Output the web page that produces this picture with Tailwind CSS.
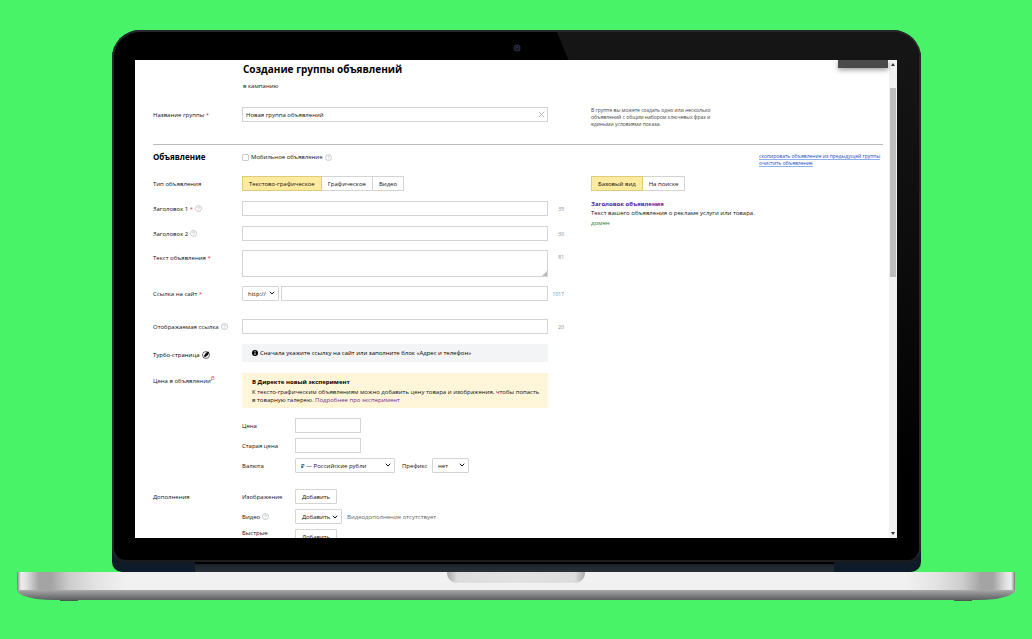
<!DOCTYPE html>
<html lang="ru">
<head>
<meta charset="utf-8">
<meta name="viewport" content="width=device-width, initial-scale=1">
<title>Создание группы объявлений</title>
<script src="https://cdn.jsdelivr.net/npm/@tailwindcss/browser@4"></script>
</head>
<body class="flex h-screen flex-col overflow-hidden bg-[#49f368] pt-[30px] pb-[38px] font-['Open_Sans','Noto_Sans',sans-serif] text-[6px] leading-[8px] text-[#111]">
<svg class="hidden" aria-hidden="true">
  <symbol id="help" viewBox="0 0 14 14"><circle cx="7" cy="7" r="6" fill="none" stroke="#b5b5b5" stroke-width="1.4"/><path d="M5 5.6C5 3.2 9 3.2 9 5.5C9 7 7 6.9 7 8.4M7 9.6V11" fill="none" stroke="#b5b5b5" stroke-width="1.3"/></symbol>
  <symbol id="chevron" viewBox="0 0 12 8"><path d="M1.5 1.5L6 6L10.500 1.500" fill="none" stroke="currentColor" stroke-width="2"/></symbol>
</svg>

<!-- Laptop lid -->
<div class="mr-[111px] ml-[112px] flex min-h-0 flex-1 flex-col rounded-t-[28px] rounded-b-[10px] bg-[#0f1b28]">
  <div class="relative flex min-h-0 flex-1 flex-col overflow-hidden rounded-t-[28px] rounded-b-[14px] border-2 border-[#25272b] border-b-[#1c1c1c] bg-black pt-[28px] pr-[22px] pb-[22px] pl-[21px]">
    <svg class="absolute top-0 right-0 h-full w-[362px]" viewBox="0 0 362 528" preserveAspectRatio="none" aria-hidden="true">
      <defs><linearGradient id="glare" x1="0" y1="0" x2="0" y2="1"><stop offset="0" stop-color="#161616"/><stop offset=".4" stop-color="#0d0d0d"/><stop offset=".85" stop-color="#000"/></linearGradient></defs>
      <path d="M0 0H362V528H215Z" fill="url(#glare)"/>
    </svg>
    <svg class="absolute top-3 left-1/2 size-[8px] -translate-x-1/2" viewBox="0 0 8 8" aria-hidden="true"><circle cx="4" cy="4" r="3.500" fill="#262a36"/><circle cx="4" cy="4" r="2.200" fill="#10131f"/><circle cx="4" cy="3.500" r="1" fill="#343c60"/></svg>

    <!-- Screen -->
    <div class="relative flex min-h-0 flex-1 overflow-hidden bg-white">
      <main class="min-w-0 flex-1 overflow-hidden pr-[6px] pl-[18px]">
        <header class="pt-[2px] pl-[90px]">
          <h1 class="text-[10px] leading-[14px] font-bold text-black">Создание группы объявлений</h1>
          <p class="mt-[6px]">в кампанию</p>
        </header>

        <div class="mt-[17px] flex h-[38px] border-b border-[#bbb]">
          <div class="grid h-[15px] flex-1 grid-cols-[89px_minmax(0,1fr)] items-center">
            <label for="group">Название группы<span class="text-red-500"> *</span></label>
            <div class="relative">
              <input id="group" type="text" value="Новая группа объявлений" class="block h-[15px] w-full border border-[#d4d4d4] bg-white px-[3px]">
              <button type="button" aria-label="Очистить" class="absolute top-[4px] right-[3px] size-[7px]"><svg viewBox="0 0 8 8" class="block size-full"><path d="M1 1L7 7M7 1L1 7" stroke="#aaa" stroke-width="1"/></svg></button>
            </div>
          </div>
          <p class="ml-[43px] w-[292px] text-[5px] leading-[7px] text-[#444]">В группе вы можете создать одно или несколько<br>объявлений с общим набором ключевых фраз и<br>едиными условиями показа.</p>
        </div>

        <div class="flex gap-[27px] pt-[6px]">
          <form class="flex-1">
            <div class="grid h-[12px] grid-cols-[89px_minmax(0,1fr)] items-center">
              <h2 class="text-[8px] leading-[12px] font-bold text-black">Объявление</h2>
              <div class="flex items-center gap-[2px]"><input id="mobile" type="checkbox" class="size-[7px] appearance-none rounded-[1px] border border-[#ccc] bg-white"><label for="mobile">Мобильное объявление</label><svg class="size-[7px]"><use href="#help"/></svg></div>
            </div>

            <div class="mt-[13px] grid h-[15px] grid-cols-[89px_minmax(0,1fr)] items-center">
              <span>Тип объявления</span>
              <div class="flex h-[15px]">
                <button type="button" class="border border-[#e0cb7a] bg-[#ffeba0] px-[6px]">Текстово-графическое</button><button type="button" class="border border-l-0 border-[#d4d4d4] px-[6px]">Графическое</button><button type="button" class="border border-l-0 border-[#d4d4d4] px-[6px]">Видео</button>
              </div>
            </div>

            <div class="mt-[10px] grid h-[15px] grid-cols-[89px_minmax(0,1fr)_16px] items-center">
              <span class="flex items-center gap-[2px]"><label for="t1">Заголовок 1<span class="text-red-500"> *</span></label><svg class="size-[7px]"><use href="#help"/></svg></span>
              <input id="t1" type="text" class="h-[15px] w-full border border-[#d4d4d4] px-[3px]"><span class="text-right text-[5px] text-[#888]">35</span>
            </div>
            <div class="mt-[10px] grid h-[15px] grid-cols-[89px_minmax(0,1fr)_16px] items-center">
              <span class="flex items-center gap-[2px]"><label for="t2">Заголовок 2</label><svg class="size-[7px]"><use href="#help"/></svg></span>
              <input id="t2" type="text" class="h-[15px] w-full border border-[#d4d4d4] px-[3px]"><span class="text-right text-[5px] text-[#888]">30</span>
            </div>
            <div class="mt-[9px] grid grid-cols-[89px_minmax(0,1fr)_16px] items-start">
              <label for="body" class="pt-[4px]">Текст объявления<span class="text-red-500"> *</span></label>
              <div class="relative"><textarea id="body" class="block h-[27px] w-full resize-none border border-[#d4d4d4] px-[3px]"></textarea><svg class="absolute right-[1px] bottom-[1px] size-[5px]" viewBox="0 0 5 5" aria-hidden="true"><path d="M5 0V5H0Z" fill="#bbb"/></svg></div>
              <span class="pt-[3px] text-right text-[5px] text-[#888]">81</span>
            </div>
            <div class="mt-[9px] grid h-[15px] grid-cols-[89px_minmax(0,1fr)_16px] items-center">
              <label for="url">Ссылка на сайт<span class="text-red-500"> *</span></label>
              <div class="flex gap-[2px]">
                <div class="relative w-[37px]"><select aria-label="Протокол" class="block h-[15px] w-full appearance-none rounded-[1px] border border-[#d4d4d4] bg-white pl-[5px]"><option>http://</option></select><svg class="pointer-events-none absolute top-[5px] right-[4px] h-[4px] w-[6px]"><use href="#chevron"/></svg></div>
                <input id="url" type="text" class="h-[15px] min-w-0 flex-1 border border-[#d4d4d4] px-[3px]">
              </div>
              <span class="text-right text-[5px] text-[#888]">1017</span>
            </div>
            <div class="mt-[18px] grid h-[15px] grid-cols-[89px_minmax(0,1fr)_16px] items-center">
              <span class="flex items-center gap-[2px]"><label for="durl">Отображаемая ссылка</label><svg class="size-[7px]"><use href="#help"/></svg></span>
              <input id="durl" type="text" class="h-[15px] w-full border border-[#d4d4d4] px-[3px]"><span class="text-right text-[5px] text-[#888]">20</span>
            </div>

            <div class="mt-[10px] grid grid-cols-[89px_minmax(0,1fr)_16px] items-center">
              <span class="flex items-center gap-[2px] pt-[3px] text-black">Турбо-страница <svg class="size-[8px]" viewBox="0 0 16 16"><circle cx="8" cy="8" r="7" fill="none" stroke="#222" stroke-width="1.300"/><path d="M14 1.500C9 2 6.500 4.500 5.500 7.500L3.500 8.500L7.500 12.500L8.700 10.500C12 9 14 6 14 1.500ZM5 10L2 14L6 11.500Z" fill="#111"/></svg></span>
              <p class="flex h-[18px] items-center gap-[2px] bg-[#f3f4f5] pl-[10px] text-black"><svg class="size-[6px]" viewBox="0 0 12 12"><circle cx="6" cy="6" r="6"/><path d="M6 2V4M6 5V10" stroke="#fff" stroke-width="1.800"/></svg>Сначала укажите ссылку на сайт или заполните блок «Адрес и телефон»</p>
            </div>

            <div class="mt-[11px] grid grid-cols-[89px_minmax(0,1fr)_16px] items-start">
              <span class="pt-[4px]">Цена в объявлении<sup class="text-[6px] leading-none text-red-500">β</sup></span>
              <div class="h-[35px] bg-[#fff6d9] pt-[5px] pl-[10px] leading-[8px]">
                <b class="block text-black">В Директе новый эксперимент</b>
                <p class="mt-[2px]">К тексто-графическим объявлениям можно добавить цену товара и изображения, чтобы попасть<br>в товарную галерею. <a href="#" class="text-[#6a2c91]">Подробнее про эксперимент</a></p>
              </div>
            </div>

            <div class="mt-[10px] ml-[89px] grid grid-cols-[53px_minmax(0,1fr)] items-center gap-y-[5px]">
              <label for="price">Цена</label><input id="price" type="text" class="h-[15px] w-[66px] border border-[#d4d4d4] px-[3px]">
              <label for="old">Старая цена</label><input id="old" type="text" class="h-[15px] w-[66px] border border-[#d4d4d4] px-[3px]">
              <label for="cur">Валюта</label>
              <div class="flex items-center">
                <div class="relative w-[100px]"><select id="cur" class="block h-[15px] w-full appearance-none rounded-[1px] border border-[#d4d4d4] bg-white pl-[5px]"><option>₽ — Российские рубли</option></select><svg class="pointer-events-none absolute top-[5px] right-[4px] h-[4px] w-[6px]"><use href="#chevron"/></svg></div>
                <label for="pre" class="ml-[7px] w-[30px]">Префикс</label>
                <div class="relative w-[37px]"><select id="pre" class="block h-[15px] w-full appearance-none rounded-[1px] border border-[#d4d4d4] bg-white pl-[5px]"><option>нет</option></select><svg class="pointer-events-none absolute top-[5px] right-[4px] h-[4px] w-[6px]"><use href="#chevron"/></svg></div>
              </div>
            </div>

            <div class="mt-[16px] grid grid-cols-[89px_53px_minmax(0,1fr)] items-center gap-y-[5px]">
              <span>Дополнения</span><span>Изображение</span><button type="button" class="h-[15px] w-[42px] rounded-[1px] border border-[#d4d4d4]">Добавить</button>
              <span class="col-start-2 flex items-center gap-[2px]">Видео <svg class="size-[7px]"><use href="#help"/></svg></span>
              <div class="flex items-center gap-[5px]"><button type="button" class="flex h-[15px] w-[47px] items-center gap-[2px] rounded-[1px] border border-[#d4d4d4] pl-[6px]">Добавить<svg class="h-[4px] w-[6px]"><use href="#chevron"/></svg></button><span class="text-[#666]">Видеодополнение отсутствует</span></div>
              <span class="col-start-2 self-start">Быстрые</span><button type="button" class="h-[15px] w-[42px] rounded-[1px] border border-[#d4d4d4]">Добавить</button>
            </div>
          </form>

          <aside class="w-[292px]">
            <nav class="ml-auto flex w-[124px] flex-col items-start pt-[2px] text-[5px] leading-[6px] whitespace-nowrap text-[#1a49c0]"><a href="#" class="border-b border-[#8fb0ee]">скопировать объявление из предыдущей группы</a><a href="#" class="border-b border-[#8fb0ee]">очистить объявление</a></nav>
            <div class="mt-[9px] flex h-[15px]">
              <button type="button" class="border border-[#e0cb7a] bg-[#ffeba0] px-[6px]">Базовый вид</button><button type="button" class="border border-l-0 border-[#d4d4d4] px-[6px]">На поиске</button>
            </div>
            <h3 class="mt-[9px] font-bold text-[#551a9b]">Заголовок объявления</h3>
            <p class="mt-[1px]">Текст вашего объявления о рекламе услуги или товара.</p>
            <p class="mt-[2px] text-[#1b7a1b]">домен</p>
          </aside>
        </div>
      </main>

      <div class="absolute top-0 right-[9px] h-[8px] w-[50px] bg-[#4a4a4a] shadow-[0_2px_5px_rgba(0,0,0,0.4)]"></div>
      <div class="flex w-[8px] flex-col items-center justify-between bg-[#f1f1f1] py-[3px]">
        <svg class="h-[3px] w-[4px]" viewBox="0 0 4 3"><path d="M0 3L2 0L4 3Z" fill="#333"/></svg>
        <div class="mt-[22px] h-[189px] w-[6px] bg-[#bdbdbd]"></div>
        <svg class="mt-auto h-[3px] w-[4px]" viewBox="0 0 4 3"><path d="M0 0L2 3L4 0Z" fill="#333"/></svg>
      </div>
    </div>
  </div>
  <div class="mr-[87px] ml-[83px] h-[10px] border-t-2 border-black bg-linear-to-b from-[#1b2128] to-[#293037]"></div>
</div>

<!-- Laptop base -->
<div class="mr-[17px] ml-[17px]">
  <div class="flex h-[18px] justify-center bg-[linear-gradient(90deg,#777_0,#bbb_2px,#eee_4px,#ddd_10px,#a4a4a4_22px,#a4a4a4_34px,#ccc_52px,#e4e4e4_80px,#f1f1f1_110px,#f1f1f1_calc(100%-110px),#e4e4e4_calc(100%-80px),#ccc_calc(100%-52px),#a4a4a4_calc(100%-34px),#a4a4a4_calc(100%-22px),#ddd_calc(100%-10px),#eee_calc(100%-4px),#bbb_calc(100%-2px),#777_100%)]">
    <div class="h-[11px] w-[138px] rounded-b-[10px] bg-[linear-gradient(90deg,#aaa,#dcdcdc_10px,#e2e2e2_50%,#dcdcdc_calc(100%-10px),#aaa)]"></div>
  </div>
  <div class="h-[10px] rounded-b-[36px_10px] bg-linear-to-b from-[#a9a9a9] to-[#5d5f62]"></div>
  <div class="flex h-px justify-between px-[43px]"><div class="w-[18px] bg-[#4b5a4e]"></div><div class="w-[18px] bg-[#4b5a4e]"></div></div>
</div>
</body>
</html>
